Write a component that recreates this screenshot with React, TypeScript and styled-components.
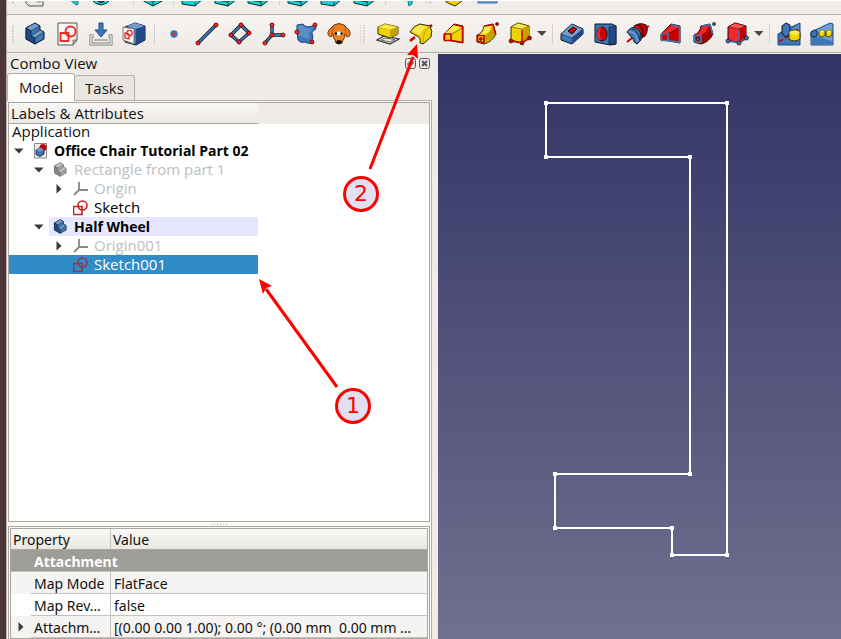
import React from "react";
import styled, { createGlobalStyle, css } from "styled-components";

const GlobalStyle = createGlobalStyle`
  * { box-sizing: border-box; }
  html, body { margin: 0; height: 100%; overflow: hidden; }
  body {
    font-family: "Open Sans", "Noto Sans", sans-serif;
    font-size: 15px;
    line-height: 19px;
    color: #111;
    background: #efece8;
  }
  button { font: inherit; color: inherit; border: 0; padding: 0; background: none; }
  svg { display: block; flex: none; }
`;

const Desktop = styled.div`
  position: relative;
  display: flex;
  height: 100vh;
  padding-left: 6px;
  background: linear-gradient(90deg, #4d363a, #553c40);
  overflow: hidden;
`;
const Window = styled.main`
  flex: 1;
  min-width: 0;
  display: flex;
  flex-direction: column;
  background: #efece8;
  border-left: 1px solid #b4afaa;
`;
const Toolbar = styled.div<{ $cut?: boolean }>`
  display: flex;
  flex: none;
  align-items: ${(p) => (p.$cut ? "flex-start" : "center")};
  height: ${(p) => (p.$cut ? 15 : 38)}px;
  border-top: ${(p) => (p.$cut ? "1px solid #fff" : "0")};
  border-bottom: 1px solid #b5afaa;
  background: ${(p) => (p.$cut ? "#f0ede9" : "linear-gradient(#f7f4f1, #edeae6)")};
  overflow: hidden;
`;
const ToolButton = styled.button`
  flex: none;
  width: 33px;
  padding: 0 5px 0 4px;
`;
const DropButton = styled.button`
  flex: none;
  width: 12px;
`;
const Grip = styled.span<{ $wide?: boolean; $cut?: boolean }>`
  flex: none;
  width: ${(p) => (p.$wide ? 16 : 12)}px;
  height: ${(p) => (p.$cut ? 3 : 18)}px;
  background: radial-gradient(circle, #b9b4ae 1px, transparent 1px) center / 4px 3px;
  background-clip: content-box;
  padding: 0 ${(p) => (p.$wide ? 6 : 4)}px 0 4px;
`;
const Separator = styled.span<{ $cut?: boolean }>`
  flex: none;
  width: 1px;
  height: ${(p) => (p.$cut ? 4 : 20)}px;
  margin: 0 3px;
  background: #d3cec8;
`;
const Workspace = styled.div`
  flex: 1;
  min-height: 0;
  display: flex;
`;
const Dock = styled.section`
  flex: none;
  width: 431px;
  display: flex;
  flex-direction: column;
  padding-right: 6px;
`;
const DockTitle = styled.header`
  display: flex;
  align-items: center;
  justify-content: space-between;
  height: 20px;
  padding: 1px 2px 0 3px;
`;
const DockControls = styled.div`
  display: flex;
  gap: 3px;
`;
const Tabs = styled.div`
  display: flex;
  align-items: flex-end;
  height: 27px;
  position: relative;
  z-index: 1;
`;
const Tab = styled.button<{ $active?: boolean }>`
  width: ${(p) => (p.$active ? 68 : 60)}px;
  height: ${(p) => (p.$active ? 28 : 25)}px;
  border: 1px solid #b4afaa;
  border-bottom: 0;
  border-radius: 3px 3px 0 0;
  background: ${(p) => (p.$active ? "linear-gradient(#fff, #fbfaf8)" : "#e9e5e1")};
  ${(p) => (p.$active ? css`margin-bottom: -1px;` : css`border-left: 0;`)}
`;
const Pane = styled.div`
  flex: 1;
  min-height: 0;
  display: flex;
  flex-direction: column;
  padding: 1px 1px 0;
  background: #faf9f7;
  border: 1px solid #b4afaa;
  border-width: 1px 1px 0 0;
`;
const TreeBox = styled.div`
  flex: 1;
  min-height: 0;
  border: 1px solid #aaa6a1;
  background: #fff;
  overflow: hidden;
`;
const TreeHeaderBar = styled.div`
  position: relative;
  z-index: 1;
  height: 21px;
  margin-bottom: -2px;
  background: #efece8;
`;
const TreeHeader = styled.div`
  width: 249px;
  height: 21px;
  padding: 1px 0 0 2px;
  border-bottom: 1px solid #aaa6a1;
  background: linear-gradient(#faf8f6, #ebe8e4);
`;
const TreeList = styled.ul`
  width: 249px;
  margin: 0;
  padding: 0;
  list-style: none;
`;
const TreeRow = styled.li<{ $level: number; $selected?: boolean }>`
  display: flex;
  height: 19px;
  padding-left: ${(p) => p.$level * 20}px;
  background: ${(p) => (p.$selected ? "#308cc6" : "transparent")};
`;
const Expander = styled.button`
  flex: none;
  width: 20px;
  padding-left: 4px;
`;
const TreeItem = styled.span<{ $tone?: "muted" | "selected"; $bold?: boolean; $marked?: boolean }>`
  flex: 1;
  display: flex;
  align-items: center;
  gap: 5px;
  padding-left: 4px;
  white-space: nowrap;
  font-size: ${(p) => (p.$bold ? 14 : 15)}px;
  font-weight: ${(p) => (p.$bold ? 700 : 400)};
  color: ${(p) => (p.$tone === "muted" ? "#bebebe" : p.$tone === "selected" ? "#fff" : "#000")};
  background: ${(p) => (p.$marked ? "#e6e6ff" : "transparent")};
`;
const TreeRoot = styled.span`
  padding-left: 3px;
`;
const Splitter = styled.div`
  flex: none;
  height: 4px;
  display: flex;
  justify-content: center;
  align-items: center;
  &::after {
    content: "";
    width: 17px;
    height: 1px;
    background: repeating-linear-gradient(90deg, #b5b1ac 0 1px, transparent 1px 3px);
  }
`;
const PropertyBox = styled.div`
  flex: none;
  padding: 1px 1px 0;
  border: 1px solid #aaa6a1;
  border-bottom: 0;
`;
const PropertyTable = styled.table`
  width: 100%;
  table-layout: fixed;
  border-spacing: 0;
  border: 1px solid #aaa6a1;
  background: #fff;
  font-family: "Noto Sans", "Open Sans", sans-serif;
  font-size: 14px;
`;
const HeadCell = styled.th<{ $first?: boolean }>`
  width: ${(p) => (p.$first ? "100px" : "auto")};
  height: 21px;
  padding: 0 2px;
  text-align: left;
  font-weight: 400;
  border-right: ${(p) => (p.$first ? "1px solid #c6c2be" : "0")};
  border-bottom: 1px solid #aaa6a1;
  background: linear-gradient(#fbf9f7, #e9e7e2);
`;
const PropertyRow = styled.tr<{ $alt?: boolean }>`
  height: 22px;
  background: ${(p) => (p.$alt ? "#f5f4f2" : "#fff")};
`;
const GroupCell = styled.th`
  height: 22px;
  padding: 1px 0 0 23px;
  text-align: left;
  color: #fff;
  background: #9f9d99;
  border-bottom: 1px solid #c6c2be;
`;
const NameCell = styled.th`
  padding: 0;
  font-weight: 400;
  text-align: left;
`;
const NameInner = styled.div`
  display: flex;
  height: 22px;
`;
const Gutter = styled.span`
  flex: none;
  width: 20px;
`;
const Name = styled.span`
  flex: 1;
  white-space: nowrap;
  padding: 2px 0 0 3px;
  border: 1px solid #c6c2be;
  border-width: 0 1px 1px 0;
`;
const ValueCell = styled.td`
  height: 22px;
  padding: 2px 0 0 3px;
  border-bottom: 1px solid #c6c2be;
  white-space: pre;
`;
const Viewport = styled.section`
  flex: 1;
  min-width: 0;
  margin-top: 1px;
  background: linear-gradient(#333366, #70708f);
  overflow: hidden;
`;
const Callouts = styled.svg`
  position: absolute;
  z-index: 2;
  left: 0;
  top: 0;
  pointer-events: none;
  font-family: "DejaVu Sans", sans-serif;
  font-size: 22px;
`;

const B = "#3f76b5", BL = "#729fcf", BD = "#204a87", BK = "#0b1521";
const Y = "#edd400", YL = "#fce94f", YD = "#c4a000", YK = "#302b00";
const R = "#ef2929", RD = "#cc0000", RK = "#280000";
const T = "#16d0d2", TK = "#032b2b";

const dot = (x: number, y: number, r = 2) => (
  <circle key={`${x}-${y}`} cx={x} cy={y} r={r} fill={R} stroke="#7a1010" strokeWidth="1" />
);
const bar = (d: string, c = B, k = BK) => (
  <>
    <path d={d} fill="none" stroke={k} strokeWidth="3.4" />
    <path d={d} fill="none" stroke={c} strokeWidth="1.8" />
  </>
);

const bodyShape = (light: string, mid: string, dark: string, ink: string) => (
  <g stroke={ink} strokeLinejoin="round">
    <path d="M3 6 12 1 17 4 17 8 21 10 21 17 12 22 3 17Z" fill={mid} />
    <path d="M3 6 12 1 17 4 8 9Z M8 14 17 8 21 10 12 16Z" fill={light} strokeWidth=".6" />
    <path d="M3 6 8 9 8 14 12 16 12 22 3 17Z" fill={dark} strokeWidth=".6" />
  </g>
);
const sketchShape = (
  <g fill="none" stroke={R} strokeWidth="1.800">
    <path d="M4.500 11H12.500V19H4.500Z" />
    <circle cx="14.500" cy="9.500" r="5" />
  </g>
);
const loft = (m: string, l: string, e: string, k: string) => (
  <g strokeLinejoin="round">
    <path d="M2 12 12 2 21 4 21 21 10 19 2 18Z" fill={m} stroke={k} />
    <path d="M3 11 13 3 20 5 10 11Z" fill={l} />
    <path d="M10 12 20 6" stroke={k} strokeWidth=".5" />
    <path d="M12 2.500 20.500 4.500V20.500L10 18.500" fill="none" stroke={e} strokeWidth="1.500" />
    <path d="M2.500 12H9V18.500H2.500Z" fill={m} stroke={e} strokeWidth="1.700" />
  </g>
);
const pipe = (m: string, l: string, d: string, e: string, k: string) => (
  <g strokeLinejoin="round">
    <path d="M2 13Q8 11 9 4L18 2 21 12Q17 20 9 22L2 20Z" fill={m} stroke={k} />
    <path d="M9 14Q15 11 18 4L20 12Q17 19 9 21Z" fill={d} />
    <path d="M9 5 17 3Q15 10 9 13L4 13Q9 11 9 5Z" fill={l} />
    <path d="M10 4 18 2.500 20.500 12" fill="none" stroke={e} strokeWidth="1.500" />
    <path d="M2.500 13.500H9V20.500L2.500 19.500Z" fill={m} stroke={e} strokeWidth="1.700" />
    <circle cx="5.800" cy="17" r="1.500" fill={e} stroke={k} strokeWidth=".7" />
    <circle cx="22" cy="2" r="1.500" fill={e} stroke={k} strokeWidth=".7" />
  </g>
);
const primitive = (m: string, l: string, d: string, k: string, e: string) => (
  <g strokeLinejoin="round">
    <path d="M3 5 10 1 21 4V17L14 21 3 18Z" fill={m} stroke={k} />
    <path d="M3 5 10 1 21 4 14 7Z" fill={l} stroke={k} strokeWidth=".5" />
    <path d="M14 7 21 4V17L14 21Z" fill={d} />
    <path d="M3 19 14 21 21 16M14 20V8" fill="none" stroke={e} strokeWidth="1.500" />
    <g fill={e} stroke={k} strokeWidth=".7">
      <circle cx="3" cy="19" r="2" /><circle cx="14" cy="21" r="2" /><circle cx="21.500" cy="16" r="2" />
    </g>
  </g>
);

const icons: Record<string, React.ReactNode> = {
  body: bodyShape(BL, B, BD, BK),
  sketch: (
    <>
      <path d="M2 1H21V18L17 23H2Z" fill="#f6f6f4" stroke="#555753" />
      <path d="M21 18H17V23Z" fill="#babdb6" stroke="#555753" strokeWidth=".7" />
      {sketchShape}
    </>
  ),
  importer: (
    <>
      <path d="M5 14H2V22H22V14H19" fill="none" stroke="#777a76" strokeWidth="3" />
      <path d="M5 14H2V22H22V14H19" fill="none" stroke="#fff" strokeWidth="1.200" />
      <path d="M5 18H19" stroke="#777a76" />
      <path d="M10 1H14V8H18L12 15 6 8H10Z" fill={B} stroke={BD} />
    </>
  ),
  mapSketch: (
    <>
      <path d="M3 5 13 1 23 4V18L14 23 3 20Z" fill={B} stroke={BK} />
      <path d="M5 4 13 1 23 4 14 7Z" fill={BL} />
      <path d="M14 7 23 4V18L14 23Z" fill={BD} />
      <path d="M1 5 12 7V22L1 18Z" fill="#f6f6f4" stroke="#777a76" />
      <path d="M3 11 7 12V17L3 16Z" fill="none" stroke={R} strokeWidth="1.300" />
      <circle cx="7.500" cy="11" r="2.700" fill="none" stroke={R} strokeWidth="1.300" />
    </>
  ),
  point: <circle cx="12" cy="12" r="2.600" fill={R} stroke={B} strokeWidth="2.200" />,
  line: <>{bar("M3 21 21 3")}{dot(3, 21)}{dot(21, 3)}</>,
  plane: <>{bar("M3 13 13 3 21 11 11 20Z")}{dot(3, 13)}{dot(13, 3)}{dot(21, 11)}{dot(11, 20)}</>,
  axes: <>{bar("M11 3V13H22M11 13 4 21")}{dot(11, 3)}{dot(11, 13)}{dot(22, 13)}{dot(4, 21)}</>,
  shapeBinder: (
    <>
      <path d="M3 3 9 2Q12 7 21 3L22 7Q16 10 19 14L18 21Q13 22 11 20Q7 22 4 18L3 10Z" fill={B} stroke={BD} />
      <path d="M4 4 9 3Q12 9 20 5Q13 10 16 17L5 14Z" fill={BL} opacity=".6" />
      {dot(21, 3)}{dot(3, 10)}{dot(18, 20)}
    </>
  ),
  clone: (
    <>
      <path d="M7 3Q12 0 17 3L22 8Q25 14 20 15L18 12Q18 16 16 18Q16 22 12 22Q8 22 8 18Q6 16 6 12L4 15Q-1 13 2 8Z" fill="#ef8022" stroke="#6b3409" />
      <path d="M7 5Q4 9 5 13M17 5Q20 9 19 13" fill="none" stroke="#b35614" />
      <path d="M8 11Q12 8 16 11Q15 14 12 13Q9 14 8 11Z" fill="#fff" />
      <circle cx="9" cy="11.500" r="1.200" /><circle cx="14.500" cy="11.500" r="1.200" />
      <ellipse cx="12" cy="20" rx="2.800" ry="2" fill="#1c1410" />
    </>
  ),
  pad: (
    <>
      <path d="M1 18 8 14 23 17 14 22Z" fill="#e8e8e5" stroke="#333735" strokeWidth="1.200" />
      <path d="M5 18 9 16 19 17.500 14 20Z" fill="none" stroke="#666" />
      <path d="M2 5 9 2 22 5V12L14 16 2 12Z" fill={Y} stroke={YK} />
      <path d="M2 5 9 2 22 5 14 8Z" fill={YL} stroke={YD} strokeWidth=".5" />
      <path d="M14 8 22 5V12L14 16Z" fill={YD} />
    </>
  ),
  revolution: (
    <>
      <path d="M1 19 6 15M19 6 23 3" stroke={RD} strokeWidth="2.500" />
      <path d="M1 10Q5 3 11 2L21 4Q24 9 22 15L14 22 11 21Q12 15 8 14Z" fill={Y} stroke={YK} />
      <path d="M3 9Q7 4 11 3L18 5Q13 7 11 13Z" fill={YL} />
      <path d="M21 5Q14 7 14 21" fill="none" stroke={YD} />
    </>
  ),
  loft: loft(Y, YL, RD, YK),
  pipe: pipe(Y, YL, YD, RD, YK),
  primitive: primitive(Y, YL, YD, YK, RD),
  pocket: (
    <>
      <path d="M1 12 12 2 23 7V12L12 22 1 18Z" fill={B} stroke={BK} />
      <path d="M1 12 12 2 23 7 12 16Z" fill={BL} stroke={BK} strokeWidth=".5" />
      <path d="M12 16 23 7V12L12 22Z" fill={BD} />
      <path d="M8 9 13 5 17 7 12 12Z" fill={RD} stroke={RK} />
    </>
  ),
  hole: (
    <>
      <path d="M2 2H19L23 4V22L17 23 2 20Z" fill={B} stroke={BK} />
      <path d="M16 5 23 4V22L16 22Z" fill={BD} stroke={BK} strokeWidth=".6" />
      <ellipse cx="9" cy="12" rx="5" ry="7" fill={RD} stroke={RK} />
      <path d="M9 5Q4 11 9 18Q3 18 4 11Q5 5 9 5Z" fill={R} />
    </>
  ),
  groove: (
    <>
      <path d="M1 20 6 16M18 7 23 4" stroke={RD} strokeWidth="2" />
      <path d="M8 4Q14 0 20 3Q23 8 19 14L14 17Z" fill={RD} stroke={RK} />
      <path d="M12 3Q18 5 17 14" fill="none" stroke={RK} strokeWidth="1.200" />
      <path d="M9 5Q15 7 14 16" fill="none" stroke={R} strokeWidth="1.800" />
      <path d="M1 10Q5 4 10 6Q16 9 15 18L11 22Q8 21 7 17Z" fill={B} stroke={BK} />
      <path d="M2 10Q9 8 12 20" fill="none" stroke={BL} strokeWidth="1.500" />
      <path d="M6 7Q12 8 14 18" fill="none" stroke={BK} strokeWidth=".8" />
    </>
  ),
  subLoft: loft(RD, R, B, RK),
  subPipe: pipe(RD, R, "#a40000", B, RK),
  subPrimitive: primitive(R, "#ff5555", RD, RK, B),
  boolean: (
    <>
      <path d="M1 12 10 7 23 1V23H1Z" fill={B} stroke={BD} />
      <path d="M13 9 22 2V12H13Z" fill={BL} opacity=".6" />
      <path d="M2 20 21 7" stroke={RD} strokeWidth="1.500" strokeDasharray="5 2" />
      <path d="M5 4 9 1 13 3V12L9 15 5 12Z" fill={B} stroke={BK} />
      <path d="M12 11Q14 8 17 8Q23 8 23 11V17Q17 21 12 17Z" fill={Y} stroke={YK} />
      <ellipse cx="17.500" cy="10.500" rx="5" ry="2" fill={YL} />
    </>
  ),
  pattern: (
    <>
      <path d="M1 10 20 1 23 2V23H1Z" fill={BL} stroke={BD} />
      <path d="M1 13 22 19V23H1Z" fill={B} />
      <path d="M1 10 4 8 7 9V14L4 15 1 14Z" fill={B} stroke={BK} strokeWidth=".8" />
      <path d="M9 10 12 8 15 9V13L12 15 9 14Z M16 10 19 8 22 9V13L19 15 16 14Z" fill={Y} stroke={YK} strokeWidth=".8" />
      <path d="M9 10 12 8 15 9 12 11Z M16 10 19 8 22 9 19 11Z" fill={YL} />
    </>
  ),
};

const Icon = ({ name }: { name: string }) => (
  <svg width="24" height="24" viewBox="0 0 24 24" overflow="visible" aria-hidden>{icons[name]}</svg>
);

const teal = (d: string, inner: string) => (
  <>
    <path d={d} fill={T} stroke={TK} strokeWidth="1" />
    <path d={inner} fill="none" stroke={TK} strokeWidth=".8" />
  </>
);
const cutIcons: Record<string, React.ReactNode> = {
  page: <><path d="M3-6H20V5H6L3 2Z" fill="#e8e8e4" stroke="#555753" /><path d="M14 1H18" stroke="#888" /></>,
  arrow: <path d="M13-2 20 4 22 3V-3Z" fill={T} stroke="#087e80" />,
  dome: <><path d="M1-3Q12 11 23-3Z" fill={T} stroke={TK} /><path d="M6-3Q12 6 18-3Z" fill={RD} stroke={TK} /></>,
  isometric: teal("M1-1 12 5 23-1V-4H1Z", "M5-3 12 1 19-3M12 1V5"),
  front: teal("M1-5V3L14 5 22-2V-6Z", "M14 5V1"),
  side: teal("M1-5V2L14 5 22-1V-6Z", "M3-1 14 1 19-3M14 1V5"),
  measure: <path d="M14-4 16 5 19 3V1L23-4Z" fill={T} stroke="#087e80" />,
  part: <path d="M4-4V1L13 5 20 0V-4Z" fill={Y} stroke={YK} />,
  group: <path d="M3-4V2H22V-4Z" fill={BL} stroke={B} />,
};
const Cut = ({ name, label }: { name: string; label: string }) => (
  <ToolButton aria-label={label}>
    <svg width="24" height="6" viewBox="0 0 24 6" aria-hidden>{cutIcons[name]}</svg>
  </ToolButton>
);
const Tool = ({ name, label }: { name: string; label: string }) => (
  <ToolButton aria-label={label}><Icon name={name} /></ToolButton>
);
const Drop = ({ label }: { label: string }) => (
  <DropButton aria-label={label}>
    <svg width="10" height="6" viewBox="0 0 10 6" aria-hidden><path d="M0 0H9.500L5 5Z" fill="#4a4744" /></svg>
  </DropButton>
);

const treeIcons: Record<string, React.ReactNode> = {
  document: (
    <>
      <path d="M1.500 .5H13.500V15H1.500Z" fill="#eeeeec" stroke="#888a85" />
      <circle cx="10" cy="4.500" r="3.500" fill={RD} />
      <path d="M3 7 7 4.500 11 6.500V11L7 13.500 3 11.500Z" fill={B} stroke={BK} strokeWidth=".8" />
      <path d="M3 7 7 4.500 11 6.500 7 8.500Z" fill={BL} />
    </>
  ),
  bodyGrey: <g transform="translate(-.5) scale(.65)">{bodyShape("#c3c3c3", "#a0a0a0", "#858585", "#666")}</g>,
  bodyBlue: <g transform="translate(-.5) scale(.65)">{bodyShape(BL, B, BD, BK)}</g>,
  origin: <path d="M6 1V9H15M6 9 1 14" fill="none" stroke="#888" strokeWidth="1.800" />,
  sketch: (
    <g fill="none" stroke="#cc1f1f" strokeWidth="1.600">
      <path d="M.5 6.500H9V14.500H.5Z" /><circle cx="9.500" cy="5.500" r="4.500" />
    </g>
  ),
  sketchDim: (
    <g fill="none" stroke="#8f3650" strokeWidth="1.600">
      <path d="M.5 6.500H9V14.500H.5Z" /><circle cx="9.500" cy="5.500" r="4.500" />
    </g>
  ),
};
const Triangle = ({ open }: { open?: boolean }) => (
  <svg width="12" height="10" viewBox="0 0 12 10" aria-hidden>
    <path d={open ? "M1 2.500H10.500L6 7.500Z" : "M3.500 0V9.500L8.500 5Z"} fill="#3c3a38" />
  </svg>
);

interface Node {
  label: string; level: number; icon: string; state?: "open" | "closed";
  tone?: "muted" | "selected"; bold?: boolean; marked?: boolean;
}
const nodes: Node[] = [
  { label: "Office Chair Tutorial Part 02", level: 0, icon: "document", state: "open", bold: true },
  { label: "Rectangle from part 1", level: 1, icon: "bodyGrey", state: "open", tone: "muted" },
  { label: "Origin", level: 2, icon: "origin", state: "closed", tone: "muted" },
  { label: "Sketch", level: 2, icon: "sketch" },
  { label: "Half Wheel", level: 1, icon: "bodyBlue", state: "open", bold: true, marked: true },
  { label: "Origin001", level: 2, icon: "origin", state: "closed", tone: "muted" },
  { label: "Sketch001", level: 2, icon: "sketchDim", tone: "selected" },
];
const properties = [
  { name: "Map Mode", value: "FlatFace" },
  { name: "Map Rev…", value: "false" },
  { name: "Attachm…", value: "[(0.00 0.00 1.00); 0.00 °; (0.00 mm  0.00 mm …", expandable: true },
];
const outline = [
  [108, 49], [289, 49], [289, 501], [234, 501], [234, 474],
  [117, 474], [117, 420], [252, 420], [252, 103], [108, 103],
];

export default function App() {
  return (
    <>
      <GlobalStyle />
      <Desktop>
        <Window>
          <Toolbar $cut role="toolbar" aria-label="View">
            <Grip $cut />
            <Cut name="page" label="New" />
            <Cut name="arrow" label="Fit" />
            <Cut name="dome" label="Draw style" />
            <DropButton aria-label="More styles" />
            <Separator $cut />
            <Cut name="isometric" label="Isometric" />
            <Separator $cut />
            <Cut name="front" label="Front" />
            <Cut name="side" label="Top" />
            <Cut name="side" label="Right" />
            <Separator $cut />
            <Cut name="side" label="Rear" />
            <Cut name="front" label="Bottom" />
            <Cut name="side" label="Left" />
            <Separator $cut />
            <Cut name="measure" label="Measure" />
            <Grip $wide $cut />
            <Cut name="part" label="Part" />
            <Cut name="group" label="Group" />
          </Toolbar>
          <Toolbar role="toolbar" aria-label="Part Design">
            <Grip />
            <Tool name="body" label="Body" />
            <Tool name="sketch" label="Create sketch" />
            <Tool name="importer" label="Edit sketch" />
            <Tool name="mapSketch" label="Map sketch to face" />
            <Separator />
            <Tool name="point" label="Datum point" />
            <Tool name="line" label="Datum line" />
            <Tool name="plane" label="Datum plane" />
            <Tool name="axes" label="Coordinate system" />
            <Tool name="shapeBinder" label="Shape binder" />
            <Tool name="clone" label="Clone" />
            <Grip $wide />
            <Tool name="pad" label="Pad" />
            <Tool name="revolution" label="Revolution" />
            <Tool name="loft" label="Additive loft" />
            <Tool name="pipe" label="Additive pipe" />
            <Tool name="primitive" label="Additive box" />
            <Drop label="Additive primitives" />
            <Separator />
            <Tool name="pocket" label="Pocket" />
            <Tool name="hole" label="Hole" />
            <Tool name="groove" label="Groove" />
            <Tool name="subLoft" label="Subtractive loft" />
            <Tool name="subPipe" label="Subtractive pipe" />
            <Tool name="subPrimitive" label="Subtractive box" />
            <Drop label="Subtractive primitives" />
            <Separator />
            <Tool name="boolean" label="Mirrored" />
            <Tool name="pattern" label="Linear pattern" />
          </Toolbar>
          <Workspace>
            <Dock>
              <DockTitle>
                <span>Combo View</span>
                <DockControls>
                  <button aria-label="Float">
                    <svg width="11" height="11" viewBox="0 0 11 11" fill="none" stroke="#555"><rect x=".5" y=".5" width="10" height="10" rx="2" /><path d="M3 5H6V8H3ZM5 5V3H8V6H6" /></svg>
                  </button>
                  <button aria-label="Close">
                    <svg width="11" height="11" viewBox="0 0 11 11" fill="none" stroke="#555"><rect x=".5" y=".5" width="10" height="10" rx="2" /><path d="M3 3 8 8M8 3 3 8" strokeWidth="2" /></svg>
                  </button>
                </DockControls>
              </DockTitle>
              <Tabs role="tablist">
                <Tab role="tab" aria-selected $active>Model</Tab>
                <Tab role="tab" aria-selected={false}>Tasks</Tab>
              </Tabs>
              <Pane>
                <TreeBox>
                  <TreeHeaderBar><TreeHeader>Labels &amp; Attributes</TreeHeader></TreeHeaderBar>
                  <TreeList role="tree">
                    <TreeRow $level={0} role="treeitem"><TreeRoot>Application</TreeRoot></TreeRow>
                    {nodes.map((n) => (
                      <TreeRow key={n.label} $level={n.level} $selected={n.tone === "selected"} role="treeitem">
                        {n.state ? (
                          <Expander aria-label={`Toggle ${n.label}`}><Triangle open={n.state === "open"} /></Expander>
                        ) : (
                          <Gutter />
                        )}
                        <TreeItem $tone={n.tone} $bold={n.bold} $marked={n.marked}>
                          <svg width="16" height="16" viewBox="0 0 16 16" aria-hidden>{treeIcons[n.icon]}</svg>
                          {n.label}
                        </TreeItem>
                      </TreeRow>
                    ))}
                  </TreeList>
                </TreeBox>
                <Splitter />
                <PropertyBox>
                  <PropertyTable>
                    <thead>
                      <tr><HeadCell $first scope="col">Property</HeadCell><HeadCell scope="col">Value</HeadCell></tr>
                    </thead>
                    <tbody>
                      <PropertyRow><GroupCell colSpan={2} scope="colgroup">Attachment</GroupCell></PropertyRow>
                      {properties.map((p, i) => (
                        <PropertyRow key={p.name} $alt={i % 2 === 0}>
                          <NameCell scope="row">
                            <NameInner>
                              {p.expandable ? (
                                <Expander aria-label={`Expand ${p.name}`}><Triangle /></Expander>
                              ) : (
                                <Gutter />
                              )}
                              <Name>{p.name}</Name>
                            </NameInner>
                          </NameCell>
                          <ValueCell>{p.value}</ValueCell>
                        </PropertyRow>
                      ))}
                    </tbody>
                  </PropertyTable>
                </PropertyBox>
              </Pane>
            </Dock>
            <Viewport aria-label="3D view">
              <svg width="403" height="585" viewBox="0 0 403 585" aria-hidden>
                <polygon points={outline.map((p) => p.join(",")).join(" ")} fill="none" stroke="#fff" strokeWidth="2" />
                {outline.map(([x, y]) => (
                  <rect key={`${x},${y}`} x={x - 2} y={y - 2} width="4" height="4" fill="#fff" />
                ))}
              </svg>
            </Viewport>
          </Workspace>
        </Window>
        <Callouts width="440" height="440" viewBox="0 0 440 440">
          <g stroke="#f00" strokeWidth="3" fill="#e1e0f2">
            <path d="M370 169 413 57M337 387 266 289" fill="none" />
            <circle cx="361" cy="194" r="16.500" />
            <circle cx="353" cy="406" r="16.500" />
          </g>
          <g fill="#f00">
            <path d="M417 44 418 59 413 55 407 55Z" />
            <path d="M259 279 272 286 266 288 263 294Z" />
            <text x="361" y="201" textAnchor="middle">2</text>
            <text x="353" y="413" textAnchor="middle">1</text>
          </g>
        </Callouts>
      </Desktop>
    </>
  );
}
